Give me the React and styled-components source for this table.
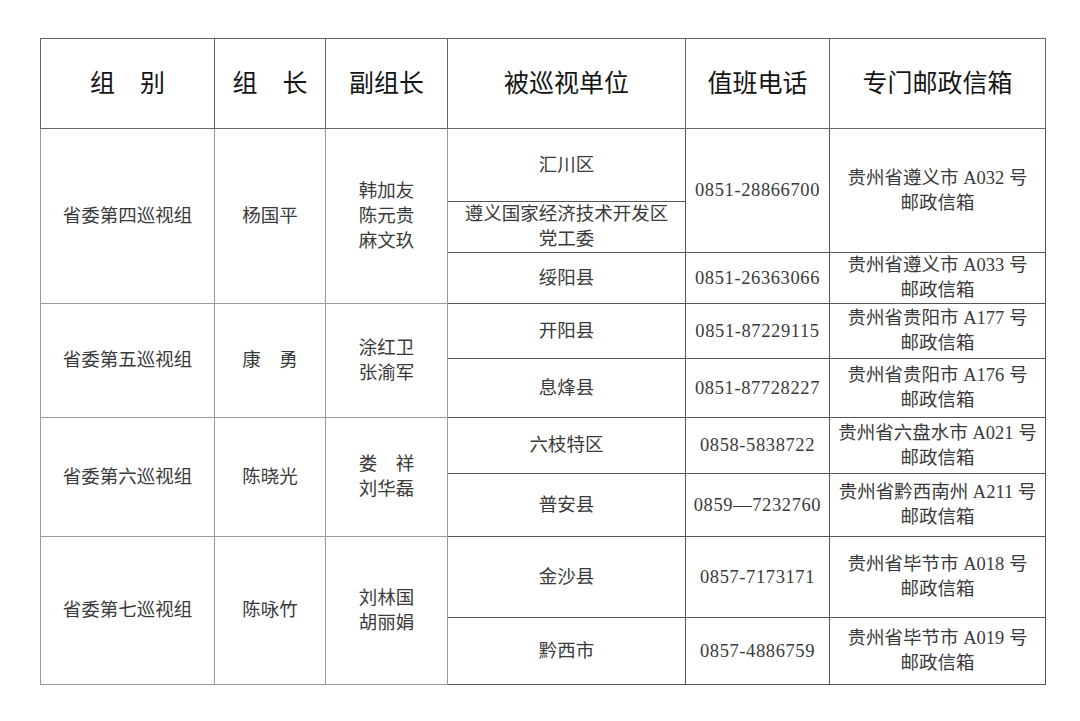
import React from "react";
import styled, { createGlobalStyle } from "styled-components";

const GlobalStyle = createGlobalStyle`
  html, body {
    margin: 0;
    padding: 0;
    background: #ffffff;
  }
`;

const Page = styled.div`
  padding: 38px 0 0 40px;
  width: 1080px;
  height: 721px;
  box-sizing: border-box;
  background: #fff;
`;

const Table = styled.table`
  width: 1005px;
  border-collapse: collapse;
  table-layout: fixed;
  font-family: "Liberation Serif", "Noto Sans CJK SC", serif;
  font-size: 18.5px;
  line-height: 25px;
  color: #3a3a3a;
`;

const Row = styled.tr`
  height: ${(p) => p.h}px;
`;

const Head = styled.th`
  border: 1px solid #666;
  font-family: "Noto Sans CJK SC", sans-serif;
  font-size: 25px;
  font-weight: 400;
  color: #141414;
  text-align: center;
  vertical-align: middle;
  padding: 0 0 4px;
`;

const Cell = styled.td`
  border: 1px solid ${(p) => (p.light ? "#9a9a9a" : "#555")};
  text-align: center;
  vertical-align: middle;
  padding: 0 2px;
  white-space: nowrap;
  letter-spacing: ${(p) => (p.phone ? "0.6px" : "0")};
`;

const groups = [
  {
    name: "省委第四巡视组",
    leader: "杨国平",
    deputies: ["韩加友", "陈元贵", "麻文玖"],
    rows: [
      { h: 73, unit: ["汇川区"], phone: "0851-28866700", mail: "贵州省遵义市 A032 号", span: 2 },
      { h: 51, unit: ["遵义国家经济技术开发区", "党工委"] },
      { h: 50, unit: ["绥阳县"], phone: "0851-26363066", mail: "贵州省遵义市 A033 号" },
    ],
  },
  {
    name: "省委第五巡视组",
    leader: "康　勇",
    deputies: ["涂红卫", "张渝军"],
    rows: [
      { h: 55, unit: ["开阳县"], phone: "0851-87229115", mail: "贵州省贵阳市 A177 号" },
      { h: 59, unit: ["息烽县"], phone: "0851-87728227", mail: "贵州省贵阳市 A176 号" },
    ],
  },
  {
    name: "省委第六巡视组",
    leader: "陈晓光",
    deputies: ["娄　祥", "刘华磊"],
    rows: [
      { h: 56, unit: ["六枝特区"], phone: "0858-5838722", mail: "贵州省六盘水市 A021 号" },
      { h: 63, unit: ["普安县"], phone: "0859—7232760", mail: "贵州省黔西南州 A211 号" },
    ],
  },
  {
    name: "省委第七巡视组",
    leader: "陈咏竹",
    deputies: ["刘林国", "胡丽娟"],
    rows: [
      { h: 81, unit: ["金沙县"], phone: "0857-7173171", mail: "贵州省毕节市 A018 号" },
      { h: 67, unit: ["黔西市"], phone: "0857-4886759", mail: "贵州省毕节市 A019 号" },
    ],
  },
];

const Lines = ({ items }) =>
  items.map((t, i) => (
    <React.Fragment key={i}>
      {i > 0 && <br />}
      {t}
    </React.Fragment>
  ));

export default function App() {
  return (
    <Page>
      <GlobalStyle />
      <Table>
        <colgroup>
          <col style={{ width: 174 }} />
          <col style={{ width: 111 }} />
          <col style={{ width: 122 }} />
          <col style={{ width: 238 }} />
          <col style={{ width: 144 }} />
          <col style={{ width: 216 }} />
        </colgroup>
        <tbody>
          <Row h={90}>
            <Head>组　别</Head>
            <Head>组　长</Head>
            <Head>副组长</Head>
            <Head>被巡视单位</Head>
            <Head>值班电话</Head>
            <Head>专门邮政信箱</Head>
          </Row>
          {groups.map((g) =>
            g.rows.map((r, i) => (
              <Row h={r.h} key={g.name + i}>
                {i === 0 && (
                  <>
                    <Cell light rowSpan={g.rows.length}>{g.name}</Cell>
                    <Cell light rowSpan={g.rows.length}>{g.leader}</Cell>
                    <Cell light rowSpan={g.rows.length}>
                      <Lines items={g.deputies} />
                    </Cell>
                  </>
                )}
                <Cell>
                  <Lines items={r.unit} />
                </Cell>
                {r.phone && (
                  <Cell phone rowSpan={r.span || 1}>
                    {r.phone}
                  </Cell>
                )}
                {r.mail && (
                  <Cell rowSpan={r.span || 1}>
                    <Lines items={[r.mail, "邮政信箱"]} />
                  </Cell>
                )}
              </Row>
            ))
          )}
        </tbody>
      </Table>
    </Page>
  );
}
